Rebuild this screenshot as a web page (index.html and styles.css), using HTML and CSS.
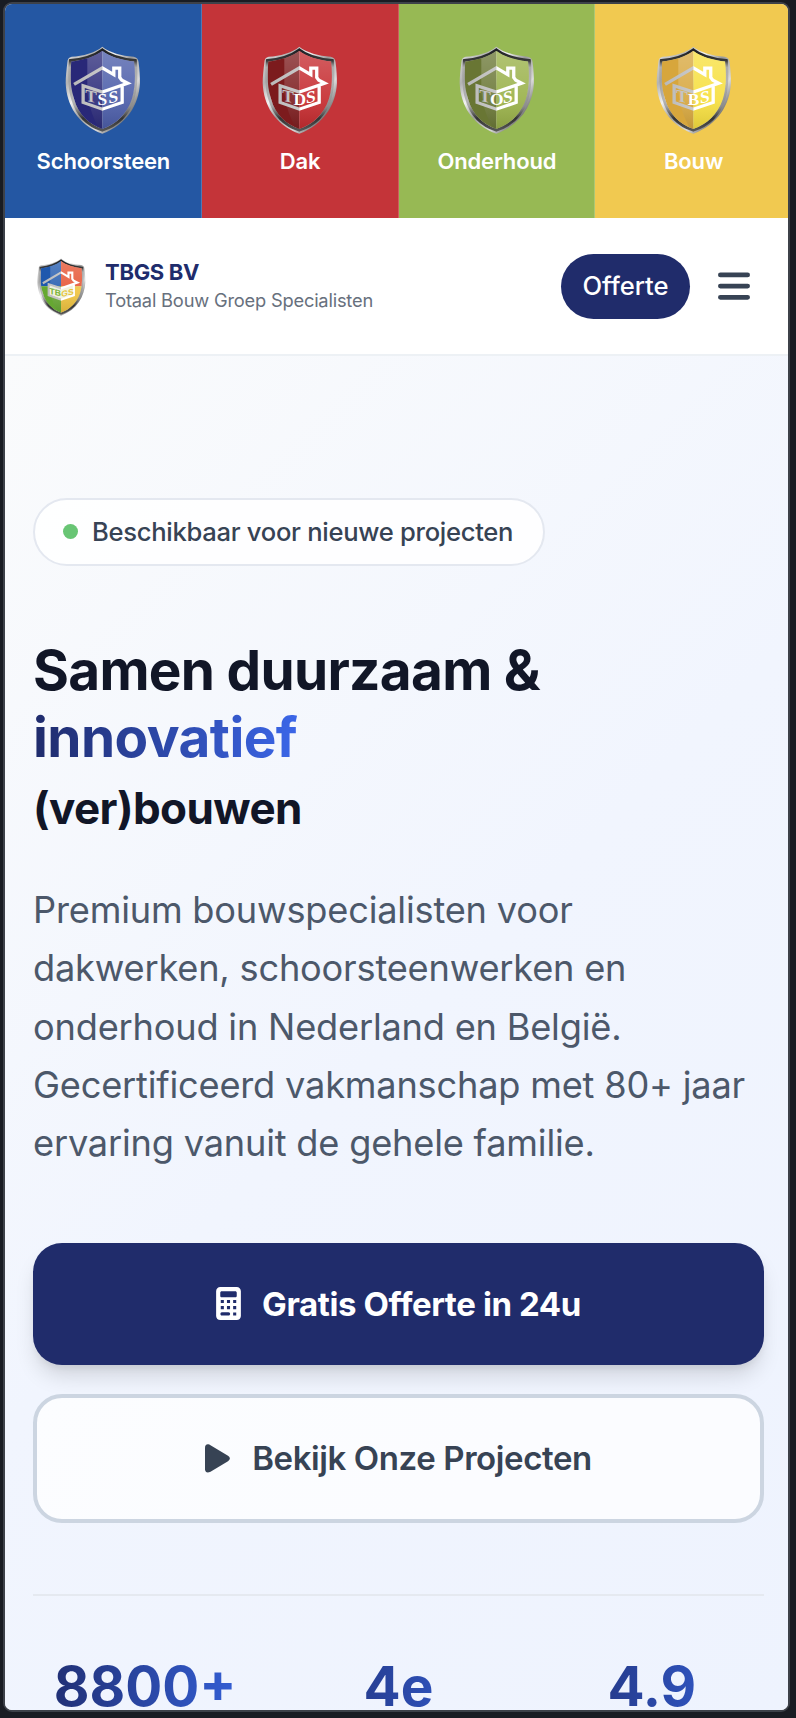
FILE: index.html
```html
<!DOCTYPE html>
<html lang="nl">
<head>
<meta charset="utf-8">
<title>TBGS BV</title>
<link rel="stylesheet" href="styles.css">
</head>
<body>
<svg class="defs" width="0" height="0" aria-hidden="true">
  <defs>
    <linearGradient id="metal" x1="0" y1="0" x2="1" y2="1">
      <stop offset="0" stop-color="#e4e4e4"/><stop offset=".22" stop-color="#b3b3b3"/>
      <stop offset=".36" stop-color="#f2f2f2"/><stop offset=".5" stop-color="#9a9a9a"/>
      <stop offset=".68" stop-color="#dcdcdc"/><stop offset=".82" stop-color="#777"/><stop offset="1" stop-color="#444"/>
    </linearGradient>
    <linearGradient id="rim" x1="0" y1="0" x2="0" y2="1">
      <stop offset="0" stop-color="#1d2024"/><stop offset=".14" stop-color="#3a3a3a"/>
      <stop offset=".22" stop-color="#999" stop-opacity=".5"/><stop offset=".7" stop-color="#888" stop-opacity=".6"/>
      <stop offset=".85" stop-color="#333"/><stop offset="1" stop-color="#555"/>
    </linearGradient>
    <linearGradient id="sheen" x1="0" y1="0" x2="0" y2="1">
      <stop offset="0" stop-color="#fff" stop-opacity=".26"/><stop offset=".6" stop-color="#fff" stop-opacity=".1"/>
      <stop offset="1" stop-color="#000" stop-opacity=".12"/>
    </linearGradient>
    <linearGradient id="stroke" gradientUnits="userSpaceOnUse" x1="60" y1="0" x2="216" y2="0">
      <stop offset="0" stop-color="#b9b9b9"/><stop offset=".53" stop-color="#c9c9c9"/>
      <stop offset=".54" stop-color="#fff"/><stop offset="1" stop-color="#fff"/>
    </linearGradient>
    <clipPath id="inner"><path d="M143 32C120 50 88 60 54 64C51 100 50 140 62 175C75 225 105 250 143 265C181 250 212 225 228 175C238 140 238 100 234 64C200 60 165 50 143 32Z"/></clipPath>
    <symbol id="frame" viewBox="36 18 218 262">
      <path fill="url(#metal)" d="M143 20C122 38 88 48 55 50Q43 53 43 66C40 90 38 110 38 128C40 192 72 252 143 279C214 252 248 192 251 128C251 110 250 90 247 66Q246 53 233 50C198 47 165 38 143 20Z"/>
      <path fill="none" stroke="url(#rim)" stroke-width="8" d="M143 29C120 47 88 57 51 61C48 100 46 140 58 176C72 227 105 256 143 269C181 256 216 227 231 176C242 140 241 100 238 61C200 57 165 47 143 29Z"/>
    </symbol>
    <symbol id="house" viewBox="36 18 218 262">
      <g fill="none" stroke="url(#stroke)" stroke-width="9.5" stroke-linejoin="miter">
        <path d="M62 132L143 83L176 103V84H193V112L199 120L216 129L143 155L88 136V186L143 206L200 186V136"/>
      </g>
    </symbol>
    <symbol id="shield" viewBox="36 18 218 262">
      <use href="#frame" x="36" y="18" width="218" height="262"/>
      <g clip-path="url(#inner)">
        <path class="shield-left" d="M40 20H143V280H40Z"/>
        <path class="shield-right" d="M143 20H250V280H143Z"/>
        <path fill="url(#sheen)" d="M100 20H250V280H143C118 240 100 190 100 140Z"/>
      </g>
      <use href="#house" x="36" y="18" width="218" height="262"/>
    </symbol>
  </defs>
</svg>

<div class="device">
  <div class="page">
    <nav class="tabs">
      <a class="tab tab-blue">
        <svg class="tab-logo" viewBox="36 18 218 262" preserveAspectRatio="none"><use href="#shield" x="36" y="18" width="218" height="262"/><g class="mono"><text class="mono-dim" transform="translate(94 181) skewY(12)">T</text><text transform="translate(129 194)">S</text><text transform="translate(161 189) skewY(-12)">S</text></g></svg>
        <span class="tab-label">Schoorsteen</span>
      </a>
      <a class="tab tab-red">
        <svg class="tab-logo" viewBox="36 18 218 262" preserveAspectRatio="none"><use href="#shield" x="36" y="18" width="218" height="262"/><g class="mono"><text class="mono-dim" transform="translate(94 181) skewY(12)">T</text><text transform="translate(126 194)">D</text><text transform="translate(162 189) skewY(-12)">S</text></g></svg>
        <span class="tab-label">Dak</span>
      </a>
      <a class="tab tab-green">
        <svg class="tab-logo" viewBox="36 18 218 262" preserveAspectRatio="none"><use href="#shield" x="36" y="18" width="218" height="262"/><g class="mono"><text class="mono-dim" transform="translate(94 181) skewY(12)">T</text><text transform="translate(125 194)">O</text><text transform="translate(162 189) skewY(-12)">S</text></g></svg>
        <span class="tab-label">Onderhoud</span>
      </a>
      <a class="tab tab-yellow">
        <svg class="tab-logo" viewBox="36 18 218 262" preserveAspectRatio="none"><use href="#shield" x="36" y="18" width="218" height="262"/><g class="mono"><text class="mono-dim" transform="translate(94 181) skewY(12)">T</text><text transform="translate(127 194)">B</text><text transform="translate(162 189) skewY(-12)">S</text></g></svg>
        <span class="tab-label">Bouw</span>
      </a>
    </nav>

    <header class="header">
      <svg class="brand-logo" viewBox="36 18 218 262" preserveAspectRatio="none">
        <use href="#frame" x="36" y="18" width="218" height="262"/>
        <g clip-path="url(#inner)">
          <path fill="#1f58ad" d="M40 20H143V146H40Z"/><path fill="#e5502f" d="M143 20H250V146H143Z"/>
          <path fill="#66a832" d="M40 146H143V280H40Z"/><path fill="#efc23c" d="M143 146H250V280H143Z"/>
          <path fill="url(#sheen)" d="M95 20H250V280H143C108 240 95 190 95 140Z"/>
        </g>
        <path fill="#f1f2df" d="M88 136L143 155L200 136V184L143 203L88 184Z"/>
        <use href="#house" x="36" y="18" width="218" height="262"/>
        <g class="mono mono-brand"><text fill="#79b237" transform="translate(92 180) skewY(12)">TB</text><text fill="#e6c53a" transform="translate(144 194) skewY(-12)">GS</text></g>
      </svg>
      <div class="brand">
        <span class="brand-name">TBGS BV</span>
        <span class="brand-sub">Totaal Bouw Groep Specialisten</span>
      </div>
      <a class="quote">Offerte</a>
      <svg class="menu" viewBox="0 0 32 28"><path d="M2.4 2.9H29.6M2.4 14.1H29.6M2.4 25.3H29.6"/></svg>
    </header>

    <main class="hero">
      <div class="badge"><span class="dot"></span><span class="badge-text">Beschikbaar voor nieuwe projecten</span></div>
      <h1 class="title">
        <span class="title-line">Samen duurzaam &amp;</span>
        <span class="title-accent">innovatief</span>
        <span class="title-small">(ver)bouwen</span>
      </h1>
      <p class="lead">Premium bouwspecialisten voor<br>dakwerken, schoorsteenwerken en<br>onderhoud in Nederland en België.<br>Gecertificeerd vakmanschap met 80+ jaar<br>ervaring vanuit de gehele familie.</p>
      <div class="actions">
        <a class="btn btn-primary">
          <svg class="icon-calc" viewBox="0 0 384 512"><path fill="currentColor" fill-rule="evenodd" d="M64 0H320C355 0 384 29 384 64V448C384 483 355 512 320 512H64C29 512 0 483 0 448V64C0 29 29 0 64 0ZM88 64C73 64 64 73 64 88V136C64 151 73 160 88 160H296C311 160 320 151 320 136V88C320 73 311 64 296 64ZM72 200H120V248H72ZM168 200H216V248H168ZM264 200H312V248H264ZM72 296H120V344H72ZM168 296H216V344H168ZM264 296H312V344H264ZM88 392C60 392 60 444 88 444H192C226 444 226 392 192 392ZM264 394H312V442H264Z"/></svg>
          <span class="btn-text">Gratis Offerte in 24u</span>
        </a>
        <a class="btn btn-outline">
          <svg class="icon-play" viewBox="0 0 25 29"><path fill="currentColor" d="M0 4Q0 0 3.3 .3Q4.3 .4 5.5 1.2L23 11.8Q26.8 14.5 23 17.2L5.5 27.8Q1 30 0 26Z"/></svg>
          <span class="btn-text">Bekijk Onze Projecten</span>
        </a>
      </div>
      <div class="stats">
        <span class="stat">8800+</span>
        <span class="stat">4e</span>
        <span class="stat">4.9</span>
      </div>
    </main>
  </div>
</div>
</body>
</html>
```

FILE: styles.css
```css
* { box-sizing: border-box; }
body {
  margin: 0;
  height: 1718px;
  padding: 2px 0 0 3px;
  overflow: hidden;
  background: #191c23;
  font-family: Inter, sans-serif;
  color: #374354;
}
.defs { display: block; height: 0; }
.device {
  width: 787px;
  height: 1710px;
  border: 2px solid #3d4149;
  border-radius: 9px;
  overflow: hidden;
}
.page { width: 787px; height: 1706px; display: flex; flex-direction: column; background: #fff; }

.tabs { display: grid; grid-template-columns: repeat(4, 1fr); flex: 0 0 214px; }
.tab { display: flex; flex-direction: column; align-items: center; padding: 42px 0 0 1px; color: #fff; border-right: 1px solid rgba(255, 255, 255, .2); }
.tab-blue { --left: #292878; --right: #495ba8; background: #2457a3; }
.tab-red { --left: #7c1b1d; --right: #c5282c; background: #c43439; }
.tab-green { --left: #697634; --right: #98b046; background: #97b954; }
.tab-yellow { --left: #d7a63c; --right: #f7df3c; background: #f1c950; }
.tab-logo { width: 76px; height: 88px; }
.tab-label { margin-top: 13px; font-size: 22px; line-height: 29px; font-weight: 600; letter-spacing: -.15px; }
.shield-left { fill: var(--left); }
.shield-right { fill: var(--right); }
.mono { font: bold 50px "Liberation Serif", serif; fill: #fff; }
.mono-dim { fill: #c4c4c4; }
.mono-brand { font: bold 38px "Liberation Sans", sans-serif; }

.header {
  flex: 0 0 138px;
  display: flex;
  align-items: center;
  padding: 0 42px 0 32px;
  border-bottom: 2px solid #edf1f5;
}
.brand-logo { width: 49px; height: 58px; margin-top: 2px; }
.brand { display: flex; flex-direction: column; margin-left: 19px; }
.brand-name { font-size: 22px; line-height: 29px; font-weight: 700; letter-spacing: -.3px; color: #202c6c; }
.brand-sub { font-size: 18.3px; line-height: 27px; letter-spacing: -.2px; color: #67707d; }
.quote {
  margin-left: auto;
  width: 129px;
  height: 65px;
  border-radius: 33px;
  background: #202c6b;
  color: #fff;
  font-size: 25.6px;
  line-height: 64px;
  font-weight: 500;
  text-align: center;
}
.menu { width: 32px; height: 28px; margin-left: 28px; fill: none; stroke: #374354; stroke-width: 4.8; stroke-linecap: round; }

.hero { flex: 1; padding: 142px 28px 0 28px; background: linear-gradient(135deg, #fafbfc 0%, #f1f5fe 50%, #eef3fe 100%); }
.badge {
  display: flex;
  align-items: center;
  gap: 14px;
  width: 512px;
  height: 68px;
  padding: 0 0 1px 28px;
  border: 2px solid #e4e8f0;
  border-radius: 34px;
  background: rgba(255, 255, 255, .85);
}
.dot { width: 15px; height: 15px; border-radius: 50%; background: #68c574; }
.badge-text { font-size: 25.6px; font-weight: 500; letter-spacing: -.3px; white-space: nowrap; }
.title { display: flex; flex-direction: column; align-items: flex-start; margin: 70px 0 0; font-weight: 700; color: #111627; white-space: nowrap; }
.title-line { font-size: 54.9px; line-height: 68px; letter-spacing: -.7px; }
.title-accent { font-size: 54.9px; line-height: 67px; letter-spacing: -.55px; color: transparent; background: linear-gradient(90deg, #1f2b6b, #3b66e8); background-clip: text; -webkit-background-clip: text; }
.title-small { font-size: 44px; line-height: 74px; letter-spacing: -.6px; }
.lead { margin: 36px 0 0; font-size: 36.2px; line-height: 58.3px; letter-spacing: -.2px; color: #4c586a; white-space: nowrap; }
.actions { display: flex; flex-direction: column; gap: 29px; margin-top: 70.5px; }
.btn { display: flex; align-items: center; justify-content: center; border-radius: 29px; font-size: 33px; font-weight: 600; white-space: nowrap; }
.btn-primary { height: 122px; background: #202c6b; color: #fff; font-weight: 700; letter-spacing: -.4px; box-shadow: 0 14px 22px -4px rgba(0, 0, 0, .14), 0 5px 8px -3px rgba(0, 0, 0, .08); }
.btn-outline { height: 129px; letter-spacing: -.4px; border: 4px solid #ccd5e1; background: rgba(255, 255, 255, .75); }
.icon-calc { width: 25px; height: 33px; margin-right: 21px; }
.icon-play { width: 25px; height: 29px; margin-right: 22px; }
.stats { display: grid; grid-template-columns: repeat(3, 1fr); gap: 29px; margin-top: 71px; padding-top: 66px; border-top: 2px solid #e5e9f0; text-align: center; }
.stat { font-size: 54.9px; line-height: 48px; font-weight: 700; color: transparent; background: linear-gradient(90deg, #1f2b6b, #3563de); background-clip: text; -webkit-background-clip: text; }
```
